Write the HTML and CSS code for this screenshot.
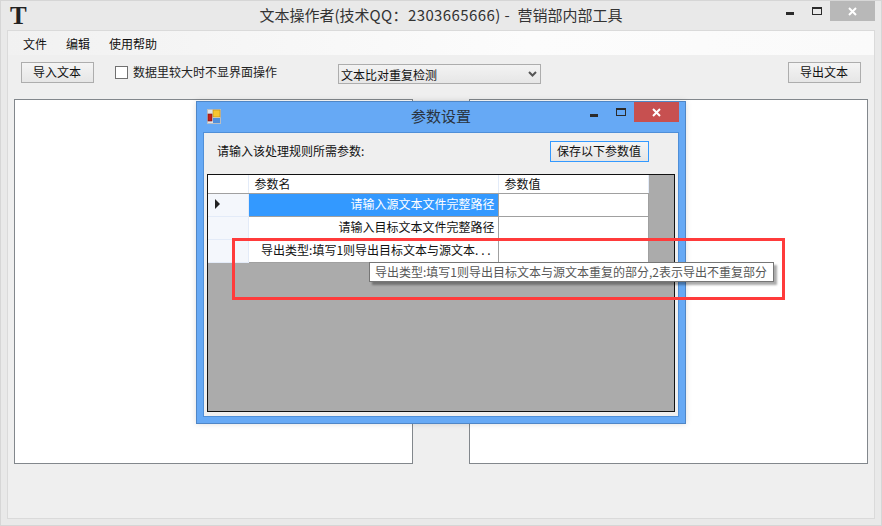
FILE: index.html
```html
<!DOCTYPE html>
<html lang="zh-cn">
<head>
  <meta charset="UTF-8" />
  <title>文本操作者</title>
  <link rel="stylesheet" href="styles.css">
</head>
<body>
  <div class="janela">
    <div class="titulo">
      <span class="logo">T</span>
      <span class="titulo-texto">文本操作者(技术<span class="titulo-numero">QQ：2303665666) -&nbsp; </span>营销部内部工具</span>
      <div class="controles">
        <span class="btn-min"></span>
        <span class="btn-max"></span>
        <span class="btn-fechar fechar-cinza">
          <svg width="9" height="9" viewBox="0 0 9 9"><path d="M1 1L8 8M8 1L1 8" stroke="#fff" stroke-width="2"/></svg>
        </span>
      </div>
    </div>
    <div class="cliente">
      <div class="menu">
        <span>文件</span>
        <span>编辑</span>
        <span>使用帮助</span>
      </div>
      <div class="barra">
        <button class="botao">导入文本</button>
        <span class="check"></span>
        <span class="check-texto">数据里较大时不显界面操作</span>
        <div class="combo">
          <span>文本比对重复检测</span>
          <svg width="9" height="6" viewBox="0 0 9 6"><path d="M1 1L4.5 4.5L8 1" fill="none" stroke="#555" stroke-width="2"/></svg>
        </div>
        <button class="botao botao-direita">导出文本</button>
      </div>
      <div class="paineis">
        <div class="painel"></div>
        <div class="painel"></div>
      </div>
    </div>
  </div>

  <div class="dialogo">
    <div class="dialogo-titulo">
      <svg class="dialogo-icone" width="14" height="15" viewBox="0 0 14 15">
        <rect x="0" y="0" width="14" height="15" fill="#b9bec4"/>
        <rect x="1" y="1" width="12" height="13" fill="#dfe3ea"/>
        <rect x="6" y="1" width="7" height="7" fill="#f7c531" stroke="#b98a12" stroke-width="0.6"/>
        <rect x="1" y="5" width="4" height="7" fill="#c4201b" stroke="#7d1512" stroke-width="0.6"/>
        <rect x="6" y="9" width="7" height="5" fill="#4f8fdc"/>
      </svg>
      <span class="dialogo-texto">参数设置</span>
      <div class="controles">
        <span class="btn-min btn-min-dialogo"></span>
        <span class="btn-max"></span>
        <span class="btn-fechar fechar-vermelho">
          <svg width="9" height="9" viewBox="0 0 9 9"><path d="M1 1L8 8M8 1L1 8" stroke="#fff" stroke-width="2"/></svg>
        </span>
      </div>
    </div>
    <div class="dialogo-corpo">
      <div class="dialogo-topo">
        <span>请输入该处理规则所需参数:</span>
        <button class="botao botao-foco">保存以下参数值</button>
      </div>
      <div class="grade">
        <table>
          <tbody>
            <tr>
              <th class="canto"></th>
              <th class="col-nome">参数名</th>
              <th class="col-valor">参数值</th>
            </tr>
            <tr>
              <td class="lado"><span class="seta"></span></td>
              <td class="nome selecionado">请输入源文本文件完整路径</td>
              <td></td>
            </tr>
            <tr>
              <td class="lado"></td>
              <td class="nome">请输入目标文本文件完整路径</td>
              <td></td>
            </tr>
            <tr>
              <td class="lado"></td>
              <td class="nome nome-cortado">导出类型:填写1则导出目标文本与源文本. . .</td>
              <td></td>
            </tr>
          </tbody>
        </table>
      </div>
    </div>
  </div>

  <div class="dica">导出类型:填写1则导出目标文本与源文本重复的部分,2表示导出不重复部分</div>
  <div class="marca"></div>
</body>
</html>
```

FILE: styles.css
```css
* {
  box-sizing: border-box;
}

body {
  margin: 0;
  width: 882px;
  height: 526px;
  overflow: hidden;
  position: relative;
  font-family: "Noto Sans CJK SC", "Liberation Sans", sans-serif;
  font-size: 12px;
  color: #111;
}

.janela {
  height: 526px;
  background-color: #e9e9e9;
  border: 1px solid #d6d6d6;
  padding: 0 6px 6px;
  display: flex;
  flex-direction: column;
}

.titulo {
  height: 29px;
  flex: none;
  position: relative;
  display: flex;
  align-items: center;
  justify-content: center;
  padding-bottom: 3px;
}

.logo {
  position: absolute;
  left: 3px;
  top: 0;
  font-family: "Liberation Serif", serif;
  font-size: 25px;
  line-height: 29px;
  font-weight: bold;
  color: #222;
}

.titulo-texto {
  font-size: 15px;
  color: #333;
}

.titulo-numero {
  letter-spacing: 0.4px;
}

.controles {
  position: absolute;
  top: 0;
  right: 0;
  display: flex;
}

.btn-min {
  width: 8px;
  height: 3px;
  background-color: #2b2b2b;
  margin: 11px 18px 0 0;
}

.btn-min-dialogo {
  margin-top: 12px;
}

.btn-max {
  width: 10px;
  height: 8px;
  border: 1px solid #2b2b2b;
  border-top-width: 2px;
  margin: 6px 8px 0 0;
}

.btn-fechar {
  width: 45px;
  height: 20px;
  display: flex;
  align-items: center;
  justify-content: center;
}

.fechar-cinza {
  background-color: #b8b8b8;
}

.fechar-vermelho {
  background-color: #c75050;
}

.cliente {
  flex: 1;
  background-color: #efefef;
  border: 1px solid #dadada;
  display: flex;
  flex-direction: column;
}

.menu {
  height: 24px;
  flex: none;
  display: flex;
  align-items: center;
  gap: 19px;
  padding-left: 15px;
  background: linear-gradient(to right, #f1f1f1, #fcfcfc 60%, #fafafa);
}

.barra {
  height: 44px;
  flex: none;
  display: flex;
  align-items: flex-start;
  padding: 7px 13px 0;
}

.botao {
  width: 73px;
  height: 21px;
  padding: 0 1px 2px 0;
  background: linear-gradient(to bottom, #f4f4f4, #e6e6e6);
  border: 1px solid #adadad;
  font-family: inherit;
  font-size: 12px;
  color: #111;
}

.botao-direita {
  margin-left: auto;
}

.check {
  width: 13px;
  height: 13px;
  background-color: #fff;
  border: 1px solid #707070;
  margin: 4px 0 0 21px;
}

.check-texto {
  margin: 1px 0 0 5px;
  line-height: 18px;
  width: 205px;
  color: #222;
}

.combo {
  width: 203px;
  height: 20px;
  margin-top: 2px;
  border: 1px solid #adadad;
  background: linear-gradient(to bottom, #f3f3f3, #e6e6e6);
  display: flex;
  align-items: center;
  justify-content: space-between;
  padding: 0 3px 0 2px;
}

.paineis {
  flex: 1;
  display: flex;
  justify-content: space-between;
  padding: 0 6px 54px;
}

.painel {
  width: 399px;
  background-color: #fff;
  border: 1px solid #82878c;
}

.dialogo {
  position: absolute;
  left: 196px;
  top: 101px;
  width: 490px;
  height: 323px;
  background-color: #66a9f5;
  border: 1px solid #4f86c6;
  box-shadow: 0 0 6px #00000022;
  padding: 0 6px 6px;
  display: flex;
  flex-direction: column;
}

.dialogo-titulo {
  height: 30px;
  flex: none;
  position: relative;
  display: flex;
  align-items: center;
  justify-content: center;
  padding-bottom: 3px;
}

.dialogo-icone {
  position: absolute;
  left: 4px;
  top: 7px;
}

.dialogo-texto {
  font-size: 15px;
  color: #2a3440;
}

.dialogo-corpo {
  flex: 1;
  background-color: #efefef;
  border: 1px solid #4f8fd8;
  padding: 0 3px 4px;
  display: flex;
  flex-direction: column;
}

.dialogo-topo {
  height: 41px;
  flex: none;
  display: flex;
  align-items: flex-start;
  justify-content: space-between;
  padding: 8px 26px 0 10px;
}

.dialogo-topo > span {
  line-height: 19px;
}

.botao-foco {
  width: 99px;
  height: 21px;
  border-color: #3399ff;
}

.grade {
  flex: 1;
  background-color: #ababab;
  border: 1px solid #111;
}

table {
  border-collapse: collapse;
  table-layout: fixed;
  width: 440px;
}

th {
  height: 18px;
  padding: 0 0 0 6px;
  font-weight: normal;
  text-align: left;
  background-color: #fff;
  border-right: 1px solid #e3ebf8;
  border-bottom: 1px solid #a0a0a0;
}

td {
  height: 23px;
  padding: 0 3px 2px 0;
  background-color: #fff;
  border: 1px solid #a0a0a0;
  border-top: none;
}

.canto {
  width: 40px;
}

.col-nome {
  width: 250px;
}

.col-valor {
  width: 150px;
}

.lado {
  background-color: #f4f7fc;
  border-color: #e3ebf8;
  border-left: none;
  border-bottom: 1px solid #e3ebf8;
  padding-left: 7px;
}

.nome {
  text-align: right;
  white-space: nowrap;
  overflow: hidden;
}

.nome-cortado {
  padding-right: 7px;
}

.selecionado {
  background-color: #3399ff;
  color: #fff;
}

.seta {
  display: block;
  width: 0;
  height: 0;
  border-left: 5px solid #222;
  border-top: 5px solid transparent;
  border-bottom: 5px solid transparent;
}

.dica {
  position: absolute;
  left: 369px;
  top: 262px;
  width: 405px;
  height: 20px;
  padding-left: 5px;
  line-height: 18px;
  background-color: #fff;
  border: 1px solid #767676;
  box-shadow: 3px 3px 2px #00000055;
  color: #575757;
  white-space: nowrap;
}

.marca {
  position: absolute;
  left: 232px;
  top: 238px;
  width: 553px;
  height: 62px;
  border: 3px solid #ff3b3b;
}
```
